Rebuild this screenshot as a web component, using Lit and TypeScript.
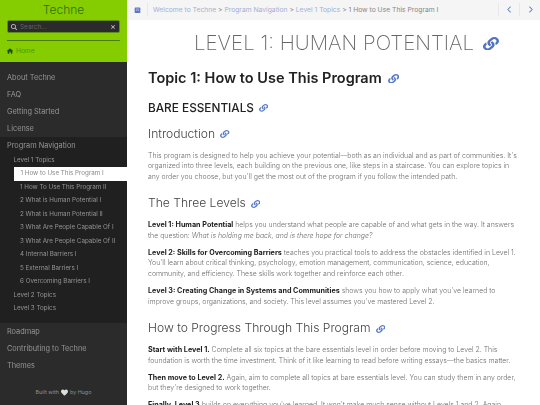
import { LitElement, html, css, svg } from "lit";
import { customElement } from "lit/decorators.js";

const linkIcon = svg`<svg class="lk" viewBox="0 0 512 512" preserveAspectRatio="none"><path fill="currentColor" d="M326.612 185.391c59.747 59.809 58.927 155.698.36 214.59-.11.12-.24.25-.36.37l-67.2 67.2c-59.27 59.27-155.699 59.262-214.96 0-59.27-59.26-59.27-155.7 0-214.96l37.106-37.106c9.84-9.84 26.786-3.3 27.294 10.606.648 17.722 3.826 35.527 9.69 52.721 1.986 5.822.567 12.262-3.783 16.612l-13.087 13.087c-28.026 28.026-28.905 73.66-1.155 101.96 28.024 28.579 74.086 28.749 102.325.51l67.2-67.19c28.191-28.191 28.073-73.757 0-101.83-3.701-3.694-7.429-6.564-10.341-8.569a16.037 16.037 0 0 1-6.947-12.606c-.396-10.567 3.348-21.456 11.698-29.806l21.054-21.055c5.521-5.521 14.182-6.199 20.584-1.731a152.482 152.482 0 0 1 20.522 17.197zM467.547 44.449c-59.261-59.262-155.69-59.27-214.96 0l-67.2 67.2c-.12.12-.25.25-.36.37-58.566 58.892-59.387 154.781.36 214.59a152.454 152.454 0 0 0 20.521 17.196c6.402 4.468 15.064 3.789 20.584-1.731l21.054-21.055c8.35-8.35 12.094-19.239 11.698-29.806a16.037 16.037 0 0 0-6.947-12.606c-2.912-2.005-6.64-4.875-10.341-8.569-28.073-28.073-28.191-73.639 0-101.83l67.2-67.19c28.239-28.239 74.3-28.069 102.325.51 27.75 28.3 26.872 73.934-1.155 101.96l-13.087 13.087c-4.35 4.35-5.769 10.79-3.783 16.612 5.864 17.194 9.042 34.999 9.69 52.721.509 13.906 17.454 20.446 27.294 10.606l37.106-37.106c59.271-59.259 59.271-155.699.001-214.959z"/></svg>`;

@customElement("app-root")
export class AppRoot extends LitElement {
  static styles = css`
    :host { display: block; width: 540px; height: 405px; overflow: hidden; font-family: Inter, "Liberation Sans", sans-serif; background: #fff; }
    .page { display: flex; height: 405px; }
    .side { width: 127px; flex: none; background: #2b2b2b; display: flex; flex-direction: column; color: #b4b4b4; }
    .head { background: #85cc00; height: 62px; box-sizing: border-box; padding: 0 7px; flex: none; }
    .brand { text-align: center; font-size: 12px; font-weight: 300; color: #2f7000; height: 20px; line-height: 20px; }
    .search { background: #2b2b2b; border: 1px solid #5f8f12; border-radius: 2px; display: flex; align-items: center; padding: 0 3px; gap: 3px; height: 11px; box-sizing: content-box; }
    .search span { flex: 1; font-size: 6.4px; color: #626262; }
    .search svg { width: 6px; height: 6px; fill: #ccc; }
    .rule { height: 1px; background: #4d7a08; margin: 7px 0 5px; }
    .home { display: flex; align-items: center; gap: 3px; font-size: 6.6px; color: #4f9408; height: 10px; }
    .home svg { width: 6px; height: 6px; fill: #234a00; }
    .nav { flex: 1; padding-top: 6.5px; font-size: 7.35px; will-change: opacity; }
    .item { height: 17px; line-height: 17px; padding-left: 7px; color: #969696; }
    .group { background: #202020; padding-bottom: 7px; }
    .sub { height: 13.5px; line-height: 13.5px; font-size: 6.25px; padding-left: 13.5px; color: #969696; }
    .leaf { height: 13.5px; line-height: 13.5px; font-size: 6.25px; padding-left: 20px; color: #949494; white-space: nowrap; }
    .leaf.on { background: #fff; color: #888; margin-left: 13.5px; padding-left: 7px; }
    .foot { font-size: 5.4px; color: #8f8f8f; height: 19px; line-height: 13px; display: flex; align-items: flex-start; justify-content: center; gap: 2px; }
    .foot svg { width: 7px; height: 7px; fill: #ddd; margin-top: 3px; }
    .main { flex: 1; min-width: 0; display: flex; flex-direction: column; }
    .top { height: 19.5px; background: #f5f5f5; display: flex; align-items: center; flex: none; font-size: 6.76px; color: #888; }
    .tbtn { width: 21px; height: 13px; display: flex; align-items: center; justify-content: center; color: #5b78c4; flex: none; }
    .tbtn svg { height: 7px; width: 5px; fill: currentColor; }
    .tbtn.b { border-left: 1px solid #e8e8e8; width: 20px; }
    .tbtn.l { width: 20px; border-right: 1px solid #e8e8e8; }
    .tbtn.l svg { width: 7px; height: 6.5px; }
    .crumbs { flex: 1; padding-left: 5px; white-space: nowrap; }
    .crumbs a { color: #a3b0d8; }
    .content { padding: 0 20px 0 21px; flex: 1; overflow: hidden; will-change: opacity; }
    .lk { display: inline-block; color: #5a7bc8; width: .78em; height: .66em; margin-left: .15em; vertical-align: -0.02em; }
    h1 { font-size: 20.5px; font-weight: 200; color: #666; text-align: center; margin: 12.5px 0 0; line-height: 22px; white-space: nowrap; }
    .hang { display: inline-block; width: 0; white-space: nowrap; }
    .hang .lk { margin-left: .44em; color: #4f72c2; }
    h2 { font-size: 14.5px; font-weight: 600; color: #222; margin: 15px 0 0; line-height: 18px; }
    h3 { font-size: 11.8px; font-weight: 500; color: #222; margin: 13.5px 0 0; line-height: 14px; }
    h4 { font-size: 12.1px; font-weight: 300; color: #444; margin: 11.5px 0 0; line-height: 15px; }
    h4.s { margin-top: 12.5px; }
    p { font-size: 6.94px; line-height: 10.8px; color: #6e6e6e; margin: 6.2px 0 0; font-weight: 300; }
    h4 + p { margin-top: 9.5px; }
    p b { font-weight: 700; font-size: 7.2px; color: #222; }
    p i { font-style: italic; }
  `;

  render() {
    const leaves = ["1 How To Use This Program II","2 What is Human Potential I","2 What is Human Potential II","3 What Are People Capable Of I","3 What Are People Capable Of II","4 Internal Barriers I","5 External Barriers I","6 Overcoming Barriers I"];
    return html`<div class="page">
      <aside class="side">
        <div class="head">
          <div class="brand">Techne</div>
          <div class="search">
            <svg viewBox="0 0 512 512"><path d="M416 208c0 45.900-14.900 88.300-40 122.700L502.600 457.400c12.500 12.500 12.500 32.800 0 45.300s-32.800 12.500-45.300 0L330.700 376c-34.400 25.200-76.800 40-122.700 40C93.100 416 0 322.900 0 208S93.100 0 208 0S416 93.100 416 208zM208 352a144 144 0 1 0 0-288 144 144 0 1 0 0 288z"/></svg>
            <span>Search...</span>
            <svg viewBox="0 0 384 512"><path d="M342.600 150.600c12.500-12.500 12.500-32.800 0-45.300s-32.800-12.500-45.300 0L192 210.700 86.600 105.400c-12.500-12.500-32.800-12.500-45.300 0s-12.500 32.800 0 45.300L146.700 256 41.400 361.400c-12.500 12.500-12.500 32.800 0 45.300s32.800 12.500 45.300 0L192 301.300 297.400 406.600c12.500 12.500 32.800 12.500 45.300 0s12.500-32.800 0-45.300L237.300 256 342.600 150.600z"/></svg>
          </div>
          <div class="rule"></div>
          <div class="home">
            <svg viewBox="0 0 576 512"><path d="M575.800 255.500c0 18-15 32.100-32 32.100h-32l.7 160.200c0 2.700-.2 5.400-.5 8.100V472c0 22.100-17.900 40-40 40H456c-1.100 0-2.200 0-3.300-.1c-1.400 .1-2.800 .1-4.200 .1H392c-22.100 0-40-17.900-40-40V360c0-17.700-14.300-32-32-32H256c-17.700 0-32 14.300-32 32V472c0 22.100-17.900 40-40 40H128c-1.500 0-3 0-4.500-.1c-1.200 .1-2.400 .1-3.600 .1H104c-22.100 0-40-17.900-40-40V360c0-.9 0-1.900 .1-2.800V287.600H32c-18 0-32-14-32-32.100c0-9 3-17 10-24L266.400 8c7-7 15-8 22-8s15 2 21 7L564.800 231.500c8 7 12 15 11 24z"/></svg>
            Home
          </div>
        </div>
        <div class="nav">
          <div class="item">About Techne</div>
          <div class="item">FAQ</div>
          <div class="item">Getting Started</div>
          <div class="item">License</div>
          <div class="group">
            <div class="item">Program Navigation</div>
            <div class="sub">Level 1 Topics</div>
            <div class="leaf on">1 How to Use This Program I</div>
            ${leaves.map((l) => html`<div class="leaf">${l}</div>`)}
            <div class="sub">Level 2 Topics</div>
            <div class="sub">Level 3 Topics</div>
          </div>
          <div class="item">Roadmap</div>
          <div class="item">Contributing to Techne</div>
          <div class="item">Themes</div>
        </div>
        <div class="foot">Built with <svg viewBox="0 0 512 512"><path d="M47.600 300.400L228.300 469.100c7.500 7 17.400 10.900 27.700 10.900s20.200-3.900 27.700-10.900L464.400 300.400c30.400-28.300 47.600-68 47.600-109.500v-5.800c0-69.900-50.500-129.500-119.400-141C347 36.500 300.600 51.400 268 84L256 96 244 84c-32.600-32.600-79-47.500-124.600-39.900C50.500 55.600 0 115.200 0 185.100v5.800c0 41.500 17.200 81.200 47.600 109.500z"/></svg> by Hugo</div>
      </aside>
      <main class="main">
        <div class="top">
          <div class="tbtn l"><svg viewBox="0 0 448 512"><path d="M64 32C28.700 32 0 60.700 0 96V416c0 35.300 28.700 64 64 64H384c35.300 0 64-28.700 64-64V96c0-35.300-28.700-64-64-64H64zM96 136h256v48H96V136zm0 96h96v48H96V232zm160 0h96v48H256V232z"/></svg></div>
          <div class="crumbs"><a>Welcome to Techne</a> &gt; <a>Program Navigation</a> &gt; <a>Level 1 Topics</a> &gt; 1 How to Use This Program I</div>
          <div class="tbtn b"><svg viewBox="0 0 320 512"><path d="M9.400 233.400c-12.500 12.500-12.500 32.800 0 45.300l192 192c12.500 12.500 32.800 12.500 45.300 0s12.500-32.800 0-45.300L77.300 256 246.600 86.600c12.500-12.500 12.500-32.800 0-45.300s-32.800-12.500-45.300 0l-192 192z"/></svg></div>
          <div class="tbtn b"><svg viewBox="0 0 320 512"><path d="M310.600 233.400c12.500 12.500 12.500 32.800 0 45.300l-192 192c-12.500 12.500-32.800 12.500-45.300 0s-12.500-32.800 0-45.300L242.700 256 73.400 86.600c-12.500-12.500-12.500-32.800 0-45.300s32.800-12.500 45.300 0l192 192z"/></svg></div>
        </div>
        <div class="content">
          <h1>LEVEL 1: HUMAN POTENTIAL<span class="hang">${linkIcon}</span></h1>
          <h2>Topic 1: How to Use This Program ${linkIcon}</h2>
          <h3>BARE ESSENTIALS ${linkIcon}</h3>
          <h4>Introduction ${linkIcon}</h4>
          <p>This program is designed to help you achieve your potential—both as an individual and as part of communities. It's organized into three levels, each building on the previous one, like steps in a staircase. You can explore topics in any order you choose, but you'll get the most out of the program if you follow the intended path.</p>
          <h4 class="s">The Three Levels ${linkIcon}</h4>
          <p><b>Level 1: Human Potential</b> helps you understand what people are capable of and what gets in the way. It answers the question: <i>What is holding me back, and is there hope for change?</i></p>
          <p><b>Level 2: Skills for Overcoming Barriers</b> teaches you practical tools to address the obstacles identified in Level 1. You'll learn about critical thinking, psychology, emotion management, communication, science, education, community, and efficiency. These skills work together and reinforce each other.</p>
          <p><b>Level 3: Creating Change in Systems and Communities</b> shows you how to apply what you've learned to improve groups, organizations, and society. This level assumes you've mastered Level 2.</p>
          <h4 class="s">How to Progress Through This Program ${linkIcon}</h4>
          <p><b>Start with Level 1.</b> Complete all six topics at the bare essentials level in order before moving to Level 2. This foundation is worth the time investment. Think of it like learning to read before writing essays—the basics matter.</p>
          <p><b>Then move to Level 2.</b> Again, aim to complete all topics at bare essentials level. You can study them in any order, but they're designed to work together.</p>
          <p><b>Finally, Level 3</b> builds on everything you've learned. It won't make much sense without Levels 1 and 2. Again, complete all topics at bare essentials first.</p>
        </div>
      </main>
    </div>`;
  }
}
